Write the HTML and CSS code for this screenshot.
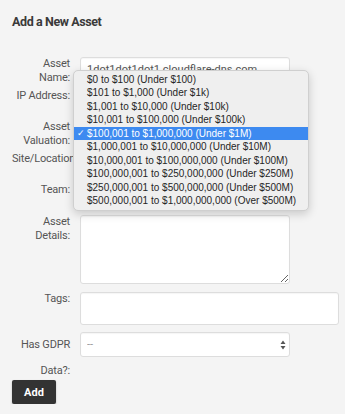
FILE: index.html
```html
<!DOCTYPE html>
<html lang="en">
<head>
  <meta charset="UTF-8">
  <meta name="viewport" content="width=device-width, initial-scale=1.0">
  <title>Add a New Asset</title>
  <link rel="stylesheet" href="styles.css">
</head>
<body>
  <div class="page">
    <h2 class="page-title">Add a New Asset</h2>

    <form class="asset-form">
      <div class="row">
        <label for="name">Asset Name:</label>
        <input type="text" id="name" class="field" value="1dot1dot1dot1.cloudflare-dns.com">
      </div>
      <div class="row">
        <label for="ip">IP Address:</label>
        <input type="text" id="ip" class="field">
      </div>
      <div class="row">
        <label for="valuation">Asset Valuation:</label>
        <select id="valuation" class="field"><option>$100,001 to $1,000,000 (Under $1M)</option></select>
      </div>
      <div class="row">
        <label for="site" class="nowrap">Site/Location:</label>
        <input type="text" id="site" class="field">
      </div>
      <div class="row">
        <label for="team">Team:</label>
        <input type="text" id="team" class="field">
      </div>
      <div class="row row-details">
        <label for="details">Asset Details:</label>
        <textarea id="details" class="field details"></textarea>
      </div>
      <div class="row row-tags">
        <label for="tags">Tags:</label>
        <input type="text" id="tags" class="field tags">
      </div>
      <div class="row row-gdpr">
        <label for="gdpr" class="gdpr-label"><span>Has GDPR</span><span class="gdpr-second">Data?:</span></label>
        <div class="select-wrap">
          <select id="gdpr" class="field plain"><option>--</option></select>
          <svg class="arrows" width="6" height="10" viewBox="0 0 6 10"><path d="M3 0.5 L5.5 4 H0.5 Z M3 9.5 L5.5 6 H0.5 Z" fill="#555"/></svg>
        </div>
      </div>

      <button type="submit" class="add-btn">Add</button>
    </form>

    <!-- open popup of the valuation select -->
    <ul class="popup">
      <li>$0 to $100 (Under $100)</li>
      <li>$101 to $1,000 (Under $1k)</li>
      <li>$1,001 to $10,000 (Under $10k)</li>
      <li>$10,001 to $100,000 (Under $100k)</li>
      <li class="selected">$100,001 to $1,000,000 (Under $1M)</li>
      <li>$1,000,001 to $10,000,000 (Under $10M)</li>
      <li>$10,000,001 to $100,000,000 (Under $100M)</li>
      <li>$100,000,001 to $250,000,000 (Under $250M)</li>
      <li>$250,000,001 to $500,000,000 (Under $500M)</li>
      <li>$500,000,001 to $1,000,000,000 (Over $500M)</li>
    </ul>
  </div>
</body>
</html>
```

FILE: styles.css
```css
body {
  margin: 0;
  background-color: #f4f4f4;
  font-family: Roboto, Arial, sans-serif;
  color: #555;
}
.page {
  position: relative;
  padding: 14px 12px 0;
}
.page-title {
  margin: 0 0 27px;
  font-size: 12.5px;
  line-height: 16px;
  letter-spacing: -0.4px;
  font-weight: bold;
  color: #3a3a3a;
}
.asset-form {
  display: flex;
  flex-direction: column;
  gap: 3.5px;
}
.row {
  display: grid;
  grid-template-columns: 58px auto;
  column-gap: 10px;
  align-items: start;
  min-height: 28px;
}
.row label {
  text-align: right;
  font-size: 11px;
  line-height: 14px;
  letter-spacing: -0.2px;
  color: #555;
}
.row label.nowrap {
  white-space: nowrap;
  text-align: left;
}
.field {
  box-sizing: border-box;
  width: 210px;
  height: 25px;
  margin: 0;
  padding: 0 6px;
  border: 1px solid #ddd;
  border-radius: 3px;
  background: #fff;
  font-family: Roboto, Arial, sans-serif;
  font-size: 11px;
  color: #555;
  box-shadow: inset 0 1px 1px rgba(0, 0, 0, 0.04);
}
.row-details {
  margin-bottom: 4.5px;
}
.details {
  height: 69px;
  resize: vertical;
}
.tags {
  width: 259px;
  height: 33px;
}
.row-tags {
  margin-bottom: 3.5px;
}
.row-gdpr {
  align-items: start;
}
.gdpr-label {
  display: flex;
  flex-direction: column;
  padding-top: 6px;
}
.gdpr-second {
  margin-top: 12px;
}
.select-wrap {
  position: relative;
  width: 210px;
}
.plain {
  appearance: none;
  color: #999;
}
.arrows {
  position: absolute;
  right: 4px;
  top: 8px;
}
.add-btn {
  align-self: flex-start;
  margin-top: -1px;
  width: 44px;
  height: 24px;
  padding: 0;
  border: none;
  border-radius: 2px;
  background-color: #333;
  color: #fff;
  font-family: Roboto, Arial, sans-serif;
  font-size: 11px;
  font-weight: bold;
  box-shadow: 0 1px 2px rgba(0, 0, 0, 0.25);
}
.popup {
  position: absolute;
  left: 73px;
  top: 70px;
  width: 236px;
  margin: 0;
  padding: 1.5px 0 2px;
  list-style: none;
  box-sizing: border-box;
  background: #efefef;
  border: 1px solid #cfcfcf;
  border-radius: 5px;
  box-shadow: 0 3px 10px rgba(0, 0, 0, 0.18);
  font-family: "Liberation Sans", Arial, sans-serif;
  font-size: 10px;
  color: #262626;
}
.popup li {
  position: relative;
  height: 13.5px;
  line-height: 13.5px;
  padding-left: 13px;
  white-space: nowrap;
}
.popup li.selected {
  background: #3d8af0;
  color: #fff;
}
.popup li.selected::before {
  content: "\2713";
  position: absolute;
  left: 3px;
  font-size: 9px;
}
```
